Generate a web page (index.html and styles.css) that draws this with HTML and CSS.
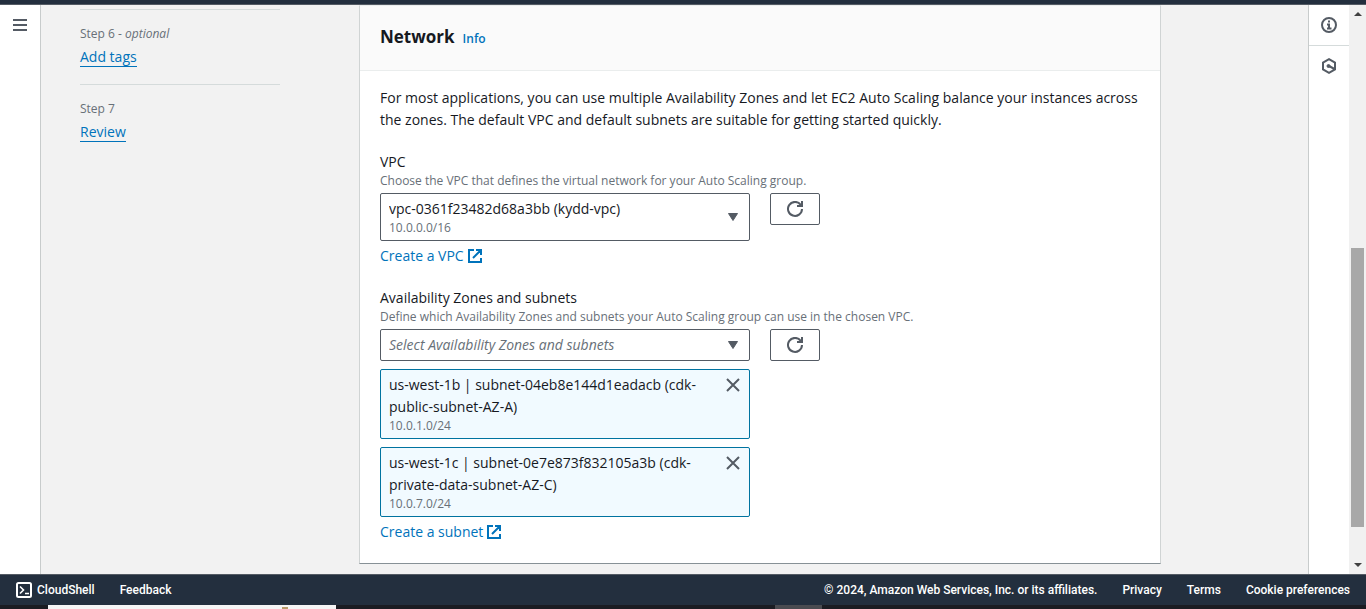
FILE: index.html
```html
<!DOCTYPE html>
<html lang="en">
<head>
<meta charset="utf-8">
<meta name="viewport" content="width=device-width, initial-scale=1">
<title>Create Auto Scaling group | EC2</title>
<link rel="stylesheet" href="styles.css">
</head>
<body>
<header class="topbar"></header>
<div class="workspace">
  <aside class="nav-rail">
    <button class="icon-button" type="button" aria-label="Open navigation">
      <svg width="14" height="12" viewBox="0 0 14 12" fill="#545b64"><path d="M0 0h14v2H0zM0 5h14v2H0zM0 10h14v2H0z"/></svg>
    </button>
  </aside>
  <main class="content">
    <nav class="steps" aria-label="Steps">
      <ol class="step-list">
        <li class="step"><span class="step-label">Step 6 - <em>optional</em></span><div class="step-title"><a class="step-link" href="#tags">Add tags</a></div></li>
        <li class="step"><span class="step-label">Step 7</span><div class="step-title"><a class="step-link" href="#review">Review</a></div></li>
      </ol>
    </nav>
    <section class="panel">
      <div class="panel-header"><h2 class="panel-title">Network</h2><a class="info-link" href="#info">Info</a></div>
      <div class="panel-body">
        <p class="intro">For most applications, you can use multiple Availability Zones and let EC2 Auto Scaling balance your instances across the zones. The default VPC and default subnets are suitable for getting started quickly.</p>
        <div class="field">
          <label class="field-label" for="vpc">VPC</label>
          <p class="hint" id="vpc-hint">Choose the VPC that defines the virtual network for your Auto Scaling group.</p>
          <div class="field-row">
            <div class="picker">
              <select class="select select-tall" id="vpc" aria-describedby="vpc-hint vpc-cidr"><option>vpc-0361f23482d68a3bb (kydd-vpc)</option></select>
              <span class="picker-detail" id="vpc-cidr">10.0.0.0/16</span>
              <svg class="caret" width="10" height="8" viewBox="0 0 10 8"><path d="M.5.5h9L5 7.5z" fill="#545b64" stroke="#545b64" stroke-linejoin="round"/></svg>
            </div>
            <button class="refresh" type="button" aria-label="Refresh VPCs"><svg width="16" height="16" viewBox="0 0 16 16" fill="none" stroke="#545b64" stroke-width="2"><path d="M10 5h5V0M15 8a7 7 0 1 1-1.4-4.3l1.2 1.3"/></svg></button>
          </div>
          <a class="create-link" href="#create-vpc">Create a VPC <svg width="14" height="14" viewBox="0 0 14 14" fill="none" stroke="#0073bb" stroke-width="2"><path d="M6 1H1v12h12V9M8 1h5v5M13 1 5 9"/></svg></a>
        </div>
        <div class="field">
          <label class="field-label" for="zones">Availability Zones and subnets</label>
          <p class="hint" id="zones-hint">Define which Availability Zones and subnets your Auto Scaling group can use in the chosen VPC.</p>
          <div class="field-row">
            <div class="picker">
              <select class="select placeholder" id="zones" aria-describedby="zones-hint"><option>Select Availability Zones and subnets</option></select>
              <svg class="caret" width="10" height="8" viewBox="0 0 10 8"><path d="M.5.5h9L5 7.5z" fill="#545b64" stroke="#545b64" stroke-linejoin="round"/></svg>
            </div>
            <button class="refresh" type="button" aria-label="Refresh subnets"><svg width="16" height="16" viewBox="0 0 16 16" fill="none" stroke="#545b64" stroke-width="2"><path d="M10 5h5V0M15 8a7 7 0 1 1-1.4-4.3l1.2 1.3"/></svg></button>
          </div>
          <ul class="tokens">
            <li class="token">
              <div>us-west-1b | subnet-04eb8e144d1eadacb (cdk-<br>public-subnet-AZ-A)<div class="token-detail">10.0.1.0/24</div></div>
              <button class="dismiss" type="button" aria-label="Remove us-west-1b subnet"><svg width="14" height="14" viewBox="0 0 14 14" fill="none" stroke="#545b64" stroke-width="2"><path d="m1 1 12 12M13 1 1 13"/></svg></button>
            </li>
            <li class="token">
              <div>us-west-1c | subnet-0e7e873f832105a3b (cdk-<br>private-data-subnet-AZ-C)<div class="token-detail">10.0.7.0/24</div></div>
              <button class="dismiss" type="button" aria-label="Remove us-west-1c subnet"><svg width="14" height="14" viewBox="0 0 14 14" fill="none" stroke="#545b64" stroke-width="2"><path d="m1 1 12 12M13 1 1 13"/></svg></button>
            </li>
          </ul>
          <a class="create-link" href="#create-subnet">Create a subnet <svg width="14" height="14" viewBox="0 0 14 14" fill="none" stroke="#0073bb" stroke-width="2"><path d="M6 1H1v12h12V9M8 1h5v5M13 1 5 9"/></svg></a>
        </div>
      </div>
    </section>
  </main>
  <aside class="tool-rail">
    <button class="icon-button" type="button" aria-label="Info">
      <svg width="16" height="16" viewBox="0 0 16 16" fill="none" stroke="#545b64" stroke-width="2"><circle cx="8" cy="8" r="7"/><path d="M8 3.5v2M6 7.5h2V11M6 11.5h4.5"/></svg>
    </button>
    <button class="icon-button" type="button" aria-label="Tutorials">
      <svg width="16" height="16" viewBox="0 0 16 16" fill="none" stroke="#545b64" stroke-width="2"><path d="M8 1.2 14 4.6v6.8L8 14.8 2 11.4V4.6zM8 8l5.5 3"/><circle cx="7.5" cy="8" r="1.5" fill="#545b64" stroke-width="1"/></svg>
    </button>
  </aside>
  <div class="scrollbar" aria-hidden="true">
    <svg width="8" height="4" viewBox="0 0 8 4"><path d="M0 4 4 0l4 4z" fill="#404040"/></svg>
    <div class="track"><div class="thumb"></div></div>
    <svg width="8" height="4" viewBox="0 0 8 4"><path d="m0 0 4 4 4-4z" fill="#404040"/></svg>
  </div>
</div>
<footer class="footer">
  <a class="footer-link shell" href="#shell"><svg width="16" height="16" viewBox="0 0 16 16" fill="none" stroke="#fff" stroke-width="2"><rect x="1" y="1" width="14" height="14" rx="1.5"/><path d="m4 4.5 3.5 3.5L4 11.5M9 11.5h4" stroke-width="1.6"/></svg>CloudShell</a>
  <a class="footer-link" href="#feedback">Feedback</a>
  <span class="copyright">© 2024, Amazon Web Services, Inc. or its affiliates.</span>
  <a class="footer-link" href="#privacy">Privacy</a>
  <a class="footer-link" href="#terms">Terms</a>
  <a class="footer-link" href="#cookies">Cookie preferences</a>
</footer>
<div class="taskbar"><div class="task-search"><div class="task-mark"></div></div><div class="task-active"></div></div>
</body>
</html>
```
FILE: styles.css
```css
* { box-sizing: border-box; }
body {
  margin: 0;
  height: 100vh;
  display: flex;
  flex-direction: column;
  overflow: hidden;
  background: #f2f3f3;
  color: #16191f;
  font: 14px/22px "Open Sans", "Noto Sans", sans-serif;
}
a { color: #0073bb; text-decoration: none; }
button, select { font: inherit; color: inherit; }
svg { display: block; flex: none; }
p, h2, ol, ul { margin: 0; padding: 0; }

.topbar { flex: none; height: 5px; background: #232f3e; border-bottom: 1px solid #545b64; }
.workspace { flex: 1; min-height: 0; display: flex; }
.nav-rail { flex: none; width: 41px; background: #fff; border-right: 1px solid #c8cccc; }
.icon-button {
  display: grid;
  place-items: center;
  width: 100%;
  height: 40px;
  padding: 0;
  border: 0;
  background: none;
}

.content {
  flex: 1;
  min-width: 0;
  display: flex;
  align-items: flex-start;
  gap: 79px;
  padding: 0 40px 0 39px;
  background: #f2f2f2;
}
.steps { flex: none; width: 200px; padding-top: 4px; }
.step-list { list-style: none; }
.step { padding: 16px 0; border-top: 1px solid #d5dbdb; }
.step-label { display: block; margin-bottom: 4px; color: #687078; font-size: 12px; line-height: 16px; }
.step-link { border-bottom: 1px solid #0073bb; }

.panel {
  flex: 1;
  max-width: 802px;
  background: #fff;
  border: 1px solid #d0d4d4;
  border-top-color: #eaeded;
  border-bottom-color: #879196;
}
.panel-header {
  display: flex;
  align-items: baseline;
  gap: 8px;
  padding: 20px 20px 22px;
  background: #fafafa;
  border-bottom: 1px solid #eaeded;
}
.panel-title { font-size: 17px; font-weight: 700; line-height: 22px; }
.info-link { font-size: 12px; font-weight: 600; line-height: 16px; }
.panel-body { display: grid; gap: 20px; padding: 16px 20px 20px; }
.field-label { display: block; }
.hint { color: #687078; font-size: 12px; line-height: 16px; }
.field-row { display: flex; align-items: flex-start; gap: 20px; margin-top: 4px; }
.picker { display: grid; width: 100%; max-width: 370px; }
.select {
  grid-area: 1 / 1;
  width: 100%;
  min-width: 0;
  height: 32px;
  padding: 4px 32px 4px 8px;
  border: 1px solid #545b64;
  border-radius: 2px;
  background: #fff;
  appearance: none;
}
.select-tall { height: 48px; padding-bottom: 20px; }
.placeholder { color: #687078; font-style: italic; }
.picker-detail {
  grid-area: 1 / 1;
  align-self: end;
  padding: 0 9px 5px;
  color: #687078;
  font-size: 12px;
  line-height: 16px;
  pointer-events: none;
}
.caret { grid-area: 1 / 1; place-self: center end; margin-right: 12px; pointer-events: none; }
.refresh {
  flex: none;
  display: grid;
  place-items: center;
  width: 50px;
  height: 32px;
  padding: 0;
  border: 1px solid #545b64;
  border-radius: 2px;
  background: #fff;
}
.create-link { display: flex; align-items: center; gap: 4px; width: max-content; margin-top: 4px; }
.tokens { display: grid; gap: 8px; max-width: 370px; margin-top: 8px; list-style: none; }
.token {
  display: flex;
  justify-content: space-between;
  align-items: flex-start;
  padding: 4px 9px 4px 8px;
  border: 1px solid #0073a0;
  border-radius: 2px;
  background: #f1faff;
}
.token-detail { color: #687078; font-size: 12px; line-height: 16px; }
.dismiss { padding: 4px 0; border: 0; background: none; }

.tool-rail { flex: none; width: 41px; background: #fff; border-left: 1px solid #c8cccc; }
.tool-rail .icon-button:first-child { height: 41px; border-bottom: 1px solid #d5dbdb; }
.scrollbar {
  flex: none;
  width: 17px;
  display: flex;
  flex-direction: column;
  align-items: center;
  padding: 7px 0;
  background: #f1f1f1;
}
.track { flex: 1; width: 13px; padding: 232px 0 36px; }
.thumb { height: 100%; background: #a8a8a8; }

.footer {
  flex: none;
  display: flex;
  align-items: center;
  gap: 25px;
  height: 31px;
  padding: 0 16px;
  background: #232f3e;
  border-top: 1px solid #545b64;
  color: #fff;
  font-family: Roboto, "Open Sans", sans-serif;
  font-size: 12px;
  font-weight: 500;
  line-height: 16px;
  white-space: nowrap;
}
.footer-link { color: #fff; }
.shell { display: flex; align-items: center; gap: 5px; }
.copyright { margin-left: auto; }
.taskbar { flex: none; display: flex; height: 4px; padding-left: 48px; background: #1b1c22; }
.task-search { width: 288px; background: #f5f5f5; }
.task-mark { width: 6px; height: 2px; margin: 2px 0 0 234px; background: #b89a6a; }
.task-active { width: 47px; margin-left: 439px; background: #4a4b50; }
```
